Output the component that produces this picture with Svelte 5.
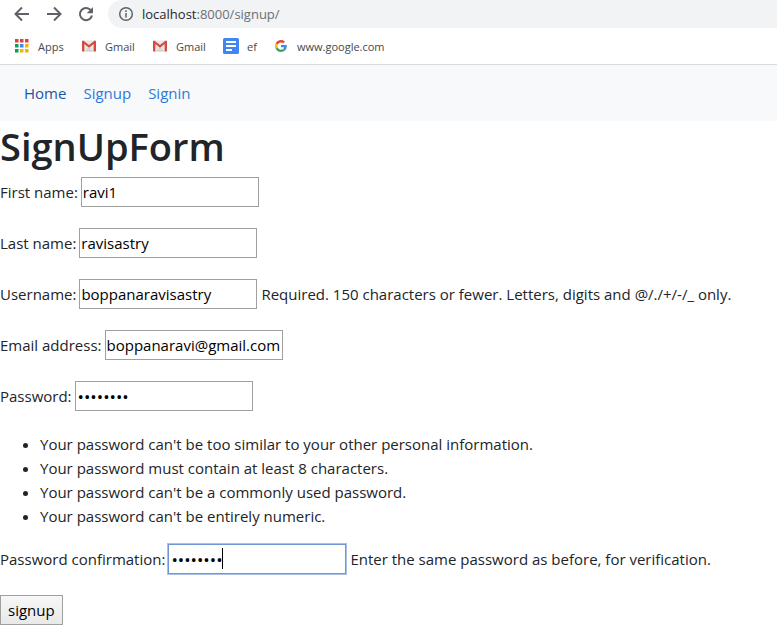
<script>
  const colors = ['#db4437', '#db4437', '#db4437', '#0f9d58', '#4285f4', '#f4b400', '#0f9d58', '#f4b400', '#f4b400'];
  const fields = [
    { id: 'first', label: 'First name:', value: 'ravi1', type: 'text' },
    { id: 'last', label: 'Last name:', value: 'ravisastry', type: 'text' },
    { id: 'username', label: 'Username:', value: 'boppanaravisastry', type: 'text', help: 'Required. 150 characters or fewer. Letters, digits and @/./+/-/_ only.' },
    { id: 'email', label: 'Email address:', value: 'boppanaravi@gmail.com', type: 'email' },
    { id: 'password', label: 'Password:', value: 'password', type: 'password' }
  ];
  const rules = [
    "Your password can't be too similar to your other personal information.",
    'Your password must contain at least 8 characters.',
    "Your password can't be a commonly used password.",
    "Your password can't be entirely numeric."
  ];
</script>

{#snippet gmail()}
  <svg width="14" height="12" viewBox="0 0 15 12" aria-hidden="true">
    <path d="M1 0h13v12H1z" fill="#e9e7e5" />
    <path d="M3 12 7.500 7l4.500 5z" fill="#d5d2d0" />
    <path d="M0 1.300Q0 0 1.300 0L7.500 5 13.700 0Q15 0 15 1.300V11q0 1-1 1h-1.500V3.800L7.500 8 2.500 3.800V12H1q-1 0-1-1z" fill="#d54b3f" />
  </svg>
{/snippet}

<header>
  <div class="toolbar">
    <button type="button" aria-label="Back"><svg width="16" height="16" viewBox="0 0 16 16"><path d="M15 8H2M8 1.500 1.500 8 8 14.500" /></svg></button>
    <button type="button" aria-label="Forward"><svg width="16" height="16" viewBox="0 0 16 16"><path d="M1 8h13M8 1.500 14.500 8 8 14.500" /></svg></button>
    <button type="button" aria-label="Reload"><svg width="16" height="16" viewBox="0 0 16 16"><path d="M13.200 4.800A6.100 6.100 0 1 0 14 9.500" /><path d="M15 1v6.300H8.700z" class="solid" /></svg></button>
    <div class="address">
      <svg width="16" height="16" viewBox="0 0 16 16" aria-hidden="true"><circle cx="8" cy="8" r="6.300" /><path d="M8 7v4.500M8 4.300V6" /></svg>
      <span>localhost<span class="path">:8000/signup/</span></span>
    </div>
  </div>
  <div class="bookmarks">
    <a href="#apps" class="apps">
      <svg width="14" height="14" viewBox="0 0 14 14" aria-hidden="true">
        {#each colors as fill, i}<rect x={(i % 3) * 5} y={Math.floor(i / 3) * 5} width="3.500" height="3.500" {fill} />{/each}
      </svg>Apps</a>
    <a href="#gmail" class="mail">{@render gmail()}Gmail</a>
    <a href="#gmail2" class="mail">{@render gmail()}Gmail</a>
    <a href="#ef" class="doc">
      <svg width="16" height="16" viewBox="0 0 16 16" aria-hidden="true"><rect width="16" height="16" rx="1.500" fill="#4285f4" /><path d="M3 4h10M3 8h10M3 12h6" stroke="#fff" stroke-width="2" /></svg>ef</a>
    <a href="#google" class="google">
      <svg width="12" height="12" viewBox="0 0 48 48" aria-hidden="true">
        <path fill="#ea4335" d="M24 9.500c3.500 0 6.700 1.200 9.200 3.600l6.900-6.900C35.900 2.400 30.500 0 24 0 14.600 0 6.500 5.400 2.600 13.200l8 6.200C12.400 13.700 17.700 9.500 24 9.500z" />
        <path fill="#4285f4" d="M47 24.500c0-1.600-.2-3.100-.4-4.500H24v9h12.900c-.6 3-2.300 5.500-4.800 7.200l7.700 6C44.400 38 47 31.800 47 24.500z" />
        <path fill="#fbbc05" d="M10.500 28.600c-.5-1.500-.8-3-.8-4.600s.3-3.100.8-4.600l-8-6.200C1 16.500 0 20.100 0 24s1 7.500 2.600 10.800z" />
        <path fill="#34a853" d="M24 48c6.500 0 11.900-2.100 15.900-5.800l-7.700-6c-2.200 1.400-4.900 2.300-8.200 2.300-6.300 0-11.600-4.200-13.500-9.900l-8 6.200C6.500 42.600 14.600 48 24 48z" />
      </svg>www.google.com</a>
  </div>
</header>

<nav>
  <a href="#home" class="active">Home</a>
  <a href="#signup">Signup</a>
  <a href="#signin">Signin</a>
</nav>

<main>
  <h1>SignUpForm</h1>
  <form onsubmit={(e) => e.preventDefault()}>
    {#each fields as f}
      <div class="row">
        <label for={f.id}>{f.label}</label>
        <input id={f.id} type={f.type} value={f.value} />
        {#if f.help}<span class="help">{f.help}</span>{/if}
      </div>
    {/each}
    <ul>
      {#each rules as rule}<li>{rule}</li>{/each}
    </ul>
    <div class="row">
      <label for="confirm">Password confirmation:</label>
      <div class="focused">
        <input id="confirm" type="password" value="password" />
        <span class="caret"></span>
      </div>
      <span class="help">Enter the same password as before, for verification.</span>
    </div>
    <button class="submit" type="submit">signup</button>
  </form>
</main>

<style>
  :global(body) { background: #fff; }
  header, nav, main, input, button { font-family: "Open Sans", "Noto Sans", sans-serif; }
  a { text-decoration: none; }
  header { border-bottom: 1px solid #d9dbde; }
  .toolbar { display: flex; height: 28px; align-items: center; padding-left: 14px; }
  .toolbar button { display: flex; padding: 0; margin-right: 16px; border: 0; background: none; }
  .toolbar svg { fill: none; stroke: #5f6368; stroke-width: 2; }
  .toolbar .solid { fill: #5f6368; stroke: none; }
  .address { display: flex; flex: 1; align-items: center; gap: 8px; height: 28px; padding-left: 10px; margin-left: -2px; border-radius: 14px 0 0 14px; background: #f1f3f4; color: #27292c; font-size: 13px; }
  .address svg { stroke-width: 1.5; }
  .path { color: #6c7074; }
  .bookmarks { display: flex; height: 36px; align-items: center; padding-left: 15px; color: #45484c; font-size: 11px; }
  .bookmarks a { display: flex; align-items: center; color: inherit; }
  .apps { gap: 9px; width: 67px; }
  .mail { gap: 9px; width: 71px; }
  .doc { gap: 8px; width: 52px; margin-left: -1px; }
  .google { gap: 10px; }
  nav { display: flex; align-items: center; gap: 17px; height: 56px; padding-left: 24px; background: #f8f9fb; font-size: 15px; }
  nav a { color: #2f78dc; }
  nav .active { color: #1d559f; }
  main { color: #212529; font-size: 15px; line-height: 24px; }
  h1 { margin: 0; padding: 1px 0 7px; font-size: 38px; line-height: 48px; font-weight: 600; }
  .row { display: flex; align-items: center; gap: 4px; height: 30px; margin-bottom: 21px; white-space: nowrap; }
  label { margin-right: -1px; }
  input { box-sizing: border-box; width: 178px; height: 30px; padding: 1px; border: 1px solid #a0a0a0; border-radius: 0; outline: 0; background: #fff; color: #000; font-size: 15px; }
  ul { margin: 0 0 16px; padding: 0 0 0 40px; }
  .focused { position: relative; }
  .focused input { display: block; border: 1px solid #6f95d4; box-shadow: 0 0 0 1px #a9c1e8; }
  .caret { position: absolute; left: 54px; top: 4px; width: 1px; height: 21px; background: #000; }
  input[type="password"] { padding-left: 2px; font-size: 17px; }
  .submit { display: block; height: 30px; padding: 0 7px; border: 1px solid #a0a0a0; border-radius: 0; background: linear-gradient(#f7f7f7, #e9e9e9); color: #000; font-size: 15px; }
</style>
